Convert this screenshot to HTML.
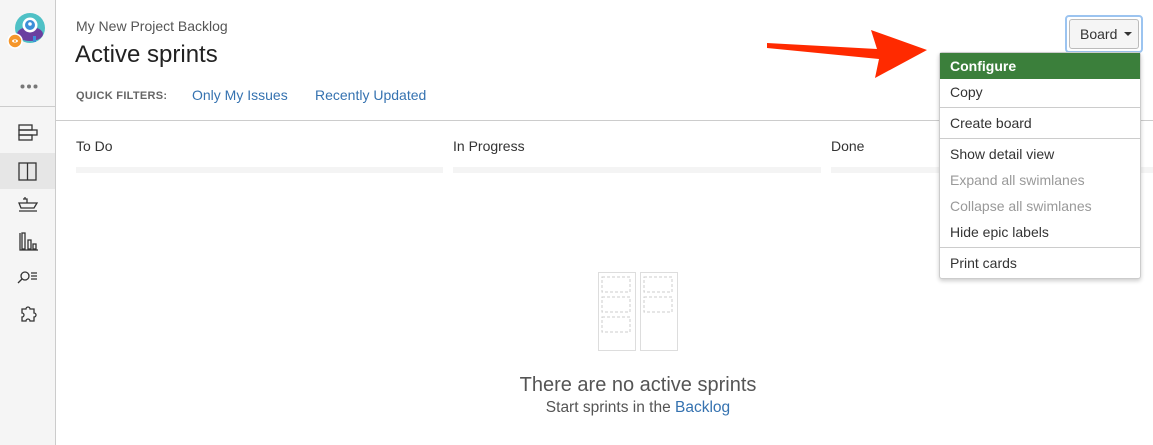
<!DOCTYPE html>
<html><head><meta charset="utf-8"><style>
*{margin:0;padding:0;box-sizing:border-box}
body{width:1153px;height:445px;overflow:hidden;background:#fff;font-family:"Liberation Sans",Arial,sans-serif;color:#333;position:relative}
.a{position:absolute}
#side{left:0;top:0;width:56px;height:445px;background:#f5f5f5;border-right:1px solid #ccc}
.menu{left:939px;top:52px;width:202px;height:227px;background:#fff;border:1px solid #ccc;border-radius:3px;box-shadow:0 2px 4px rgba(0,0,0,.2);font-size:14px}
.mi{position:absolute;left:0;width:200px;height:26px;line-height:26px;padding-left:10px;color:#333}
.sep{position:absolute;left:0;width:200px;height:1px;background:#ccc}
</style></head><body>
<div id="side" class="a">
 <svg class="a" style="left:6px;top:12px" width="42" height="40" viewBox="0 0 42 40">
  <circle cx="24" cy="16" r="15" fill="#4fc1c6"/>
  <ellipse cx="24" cy="22" rx="13" ry="7" fill="#6b3fa0"/>
  <circle cx="24" cy="13" r="7.5" fill="#fff"/><circle cx="24" cy="13" r="5" fill="#3d8fd8"/><circle cx="24" cy="12" r="1.8" fill="#fff"/>
  <rect x="27" y="24" width="3" height="6" fill="#3d8fd8"/>
  <circle cx="9" cy="29" r="7" fill="#f5962a" stroke="#fff" stroke-width="1.5"/><ellipse cx="9" cy="29" rx="3" ry="1.6" fill="#fff"/><circle cx="9" cy="29" r="1" fill="#f5962a"/>
 </svg>
 <div class="a" style="left:20px;top:76px;width:18px;height:4px">
  <svg width="18" height="5"><circle cx="2.5" cy="2.5" r="2" fill="#777"/><circle cx="9" cy="2.5" r="2" fill="#777"/><circle cx="15.5" cy="2.5" r="2" fill="#777"/></svg></div>
 <div class="a" style="left:0;top:106px;width:55px;height:1px;background:#ccc"></div>
 <div class="a" style="left:0;top:153px;width:55px;height:36px;background:#e6e6e6"></div>
 <svg class="a" style="left:16px;top:122px" width="24" height="210" viewBox="0 0 24 210" fill="none" stroke="#333" stroke-width="1.3">
  <rect x="3" y="3" width="13" height="5"/><rect x="3" y="8" width="18" height="5"/><rect x="3" y="13" width="13" height="5"/>
  <rect x="3" y="41" width="17" height="17"/><line x1="11.5" y1="41" x2="11.5" y2="58"/>
  <path d="M7 77h4v4M9 77v-2M3 81h18l-3 5H5z M3 89h18"/>
  <path d="M4 111v17h18M6 111v16h3v-16z M12 118h3v9h-3z M17 122h3v5h-3z"/>
  <circle cx="9" cy="154" r="4"/><path d="M6 157l-4 4M15 151h6M15 154h6M15 157h6"/>
  <path d="M6 187h4a2 2 0 1 1 4 0h4v4a2 2 0 1 1 0 4v4h-4a2 2 0 1 0-4 0H6v-4a2 2 0 1 0 0-4z"/>
 </svg>
</div>
<div class="a" style="left:76px;top:18px;font-size:14px;color:#555">My New Project Backlog</div>
<div class="a" style="left:75px;top:41px;font-size:24px;color:#222">Active sprints</div>
<div class="a" style="left:76px;top:90px;font-size:11px;font-weight:bold;color:#666;letter-spacing:.3px">QUICK FILTERS:</div>
<div class="a" style="left:192px;top:87px;font-size:14px;color:#3572b0">Only My Issues</div>
<div class="a" style="left:315px;top:87px;font-size:14px;color:#3572b0">Recently Updated</div>
<div class="a" style="left:56px;top:120px;width:1097px;height:1px;background:#ccc"></div>
<div class="a" style="left:76px;top:138px;font-size:14px">To Do</div>
<div class="a" style="left:453px;top:138px;font-size:14px">In Progress</div>
<div class="a" style="left:831px;top:138px;font-size:14px">Done</div>
<div class="a" style="left:76px;top:167px;width:367px;height:6px;background:#f4f4f4"></div>
<div class="a" style="left:453px;top:167px;width:368px;height:6px;background:#f4f4f4"></div>
<div class="a" style="left:831px;top:167px;width:322px;height:6px;background:#f4f4f4"></div>
<svg class="a" style="left:597px;top:271px" width="82" height="81" viewBox="0 0 82 81" fill="none">
 <rect x="1.5" y="1.5" width="37" height="78" stroke="#ddd"/><rect x="43.5" y="1.5" width="37" height="78" stroke="#ddd"/>
 <g stroke="#ccc" stroke-dasharray="3 2"><rect x="5" y="6" width="28" height="15"/><rect x="5" y="26" width="28" height="15"/><rect x="5" y="46" width="28" height="15"/><rect x="47" y="6" width="28" height="15"/><rect x="47" y="26" width="28" height="15"/></g>
</svg>
<div class="a" style="left:0;width:1276px;top:374px;text-align:center;font-size:20px;color:#555">There are no active sprints</div>
<div class="a" style="left:0;width:1276px;top:399px;text-align:center;font-size:15.5px;color:#555">Start sprints in the <span style="color:#3572b0">Backlog</span></div>
<svg class="a" style="left:765px;top:30px" width="170" height="52" viewBox="0 0 170 52"><path d="M2 13 L112 19 L106 0 L162 20 L110 48 L114 29 L2 18 Z" fill="#ff2a00"/></svg>
<div class="a" style="left:1065px;top:15px;width:78px;height:38px;border:2px solid #9cc4f0;border-radius:4px;"></div>
<div class="a" style="left:1069px;top:19px;width:70px;height:30px;background:#f5f5f5;border:1px solid #bbb;border-radius:3px;font-size:14px;line-height:28px;padding-left:10px;color:#333">Board <svg width="8" height="5" style="margin-left:3px;vertical-align:2px"><path d="M0 0h8L4 4z" fill="#333"/></svg></div>
<div class="a menu">
 <div class="mi" style="top:0;background:#3b7f3b;color:#fff;font-weight:bold">Configure</div>
 <div class="mi" style="top:26px">Copy</div>
 <div class="sep" style="top:54px"></div>
 <div class="mi" style="top:57px">Create board</div>
 <div class="sep" style="top:85px"></div>
 <div class="mi" style="top:88px">Show detail view</div>
 <div class="mi" style="top:114px;color:#999">Expand all swimlanes</div>
 <div class="mi" style="top:140px;color:#999">Collapse all swimlanes</div>
 <div class="mi" style="top:166px">Hide epic labels</div>
 <div class="sep" style="top:194px"></div>
 <div class="mi" style="top:197px">Print cards</div>
</div>
</body></html>
